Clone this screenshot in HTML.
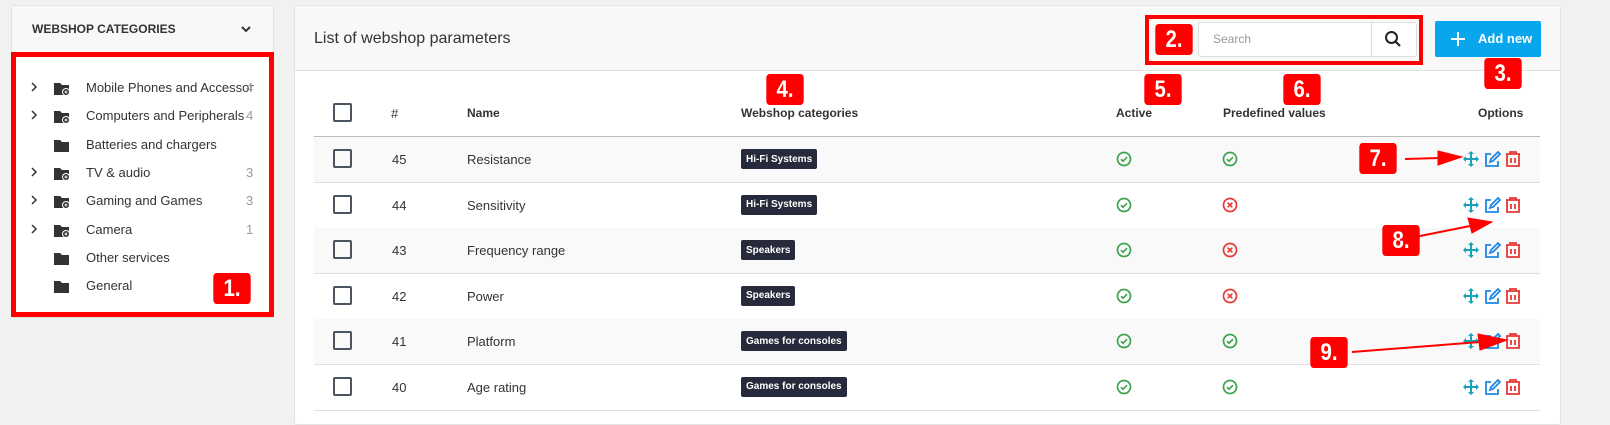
<!DOCTYPE html><html><head><style>
*{box-sizing:border-box;margin:0;padding:0}
body{width:1610px;height:418px;background:#f1f1f1;font-family:"Liberation Sans",sans-serif;position:relative;overflow:hidden;color:#333}
.abs{position:absolute}
.card{background:#fff;border:1px solid #e3e3e3;border-radius:3px}
.badge{position:absolute;background:#f00;color:#fff;font-weight:bold;font-size:24px;border-radius:4px;text-align:center;line-height:31px;width:44px;height:31px;font-family:"Liberation Sans",sans-serif;transform:scaleX(.85)}
.tag{position:absolute;background:#272a3a;color:#fff;font-size:10px;font-weight:bold;padding:0 5px;height:20px;display:flex;align-items:center;border-radius:2px}
.cb{position:absolute;left:333px;width:19px;height:19px;border:2px solid #4a5560;border-radius:2px}
.row{position:absolute;left:314px;width:1226px;height:46px;border-bottom:1px solid #e0e0e0}
.t{position:absolute;font-size:13px;color:#333}
</style></head><body>
<div class="abs card" style="left:11px;top:5px;width:263px;height:313px"></div>
<div class="abs" style="left:12px;top:6px;width:261px;height:46px;background:#f8f8f8"></div>
<div class="abs" style="left:32px;top:22px;font-size:12px;font-weight:bold;color:#333">WEBSHOP CATEGORIES</div>
<svg class="abs" style="left:240px;top:24px" width="12" height="10"><path d="M2 3l4 4 4-4" stroke="#333" stroke-width="2" fill="none"/></svg>
<div class="abs" style="left:11px;top:52px;width:263px;height:265px;border:5px solid #f00"></div>
<div class="abs" style="left:0;top:0">
<script>
var items=[["Mobile Phones and Accessor","4",1],["Computers and Peripherals","4",1],["Batteries and chargers","",0],["TV & audio","3",1],["Gaming and Games","3",1],["Camera","1",1],["Other services","",0],["General","",0]];
var h="";items.forEach(function(it,i){var y=80+i*28.3;
if(it[2])h+='<svg class="abs" style="left:30px;top:'+(y+2)+'px" width="8" height="10"><path d="M2 1l4 4-4 4" stroke="#333" stroke-width="1.5" fill="none"/></svg>';
h+='<svg class="abs" style="left:53px;top:'+y+'px" width="18" height="16"><path d="M1 3h6l2 2h7v10H1z" fill="#333"/>'+(it[2]?'<circle cx="13" cy="12" r="4" fill="#fff"/><circle cx="13" cy="12" r="3" fill="#333"/><path d="M11.5 12h3M13 10.5v3" stroke="#fff" stroke-width="1"/>':'')+'</svg>';
h+='<div class="abs" style="left:86px;top:'+(y)+'px;font-size:13px;color:#333;width:165px;white-space:nowrap;overflow:visible">'+it[0].replace("&","&amp;")+'</div>';
if(it[1])h+='<div class="abs" style="left:246px;top:'+y+'px;font-size:13px;color:#999">'+it[1]+'</div>';});
document.write(h);
</script>
</div>
<div class="badge" style="left:210px;top:273px">1.</div>

<div class="abs card" style="left:294px;top:5px;width:1267px;height:420px"></div>
<div class="abs" style="left:295px;top:6px;width:1265px;height:65px;background:#f8f8f8;border-bottom:1px solid #e0e0e0"></div>
<div class="abs" style="left:314px;top:30px;font-size:16px;color:#333">List of webshop parameters</div>
<div class="abs" style="left:1145px;top:15px;width:278px;height:50px;border:4px solid #f00"></div>
<div class="badge" style="left:1152px;top:24px">2.</div>
<div class="abs" style="left:1198px;top:22px;width:219px;height:35px;border:1px solid #ddd;border-radius:3px;background:#fff"></div>
<div class="abs" style="left:1371px;top:22px;width:1px;height:35px;background:#ddd"></div>
<div class="abs" style="left:1213px;top:32px;font-size:12px;color:#999">Search</div>
<svg class="abs" style="left:1384px;top:30px" width="18" height="18"><circle cx="7.5" cy="7.5" r="5.5" stroke="#222" stroke-width="2" fill="none"/><path d="M11.5 11.5l4.5 4.5" stroke="#222" stroke-width="2.2"/></svg>
<div class="abs" style="left:1435px;top:21px;width:106px;height:36px;background:#0aa6ed;border-radius:2px"></div>
<svg class="abs" style="left:1450px;top:31px" width="16" height="16"><path d="M8 1v14M1 8h14" stroke="#fff" stroke-width="2"/></svg>
<div class="abs" style="left:1478px;top:31px;font-size:13px;color:#fff;font-weight:bold">Add new</div>
<div class="badge" style="left:1481px;top:58px">3.</div>

<div class="abs" style="left:314px;top:136px;width:1226px;height:1px;background:#bbb"></div>
<div class="cb" style="top:103px"></div>
<div class="t" style="left:391px;top:106px">#</div>
<div class="t" style="left:467px;top:106px;font-weight:bold;font-size:12px">Name</div>
<div class="t" style="left:741px;top:106px;font-weight:bold;font-size:12px">Webshop categories</div>
<div class="t" style="left:1116px;top:106px;font-weight:bold;font-size:12px">Active</div>
<div class="t" style="left:1223px;top:106px;font-weight:bold;font-size:12px">Predefined values</div>
<div class="t" style="left:1478px;top:106px;font-weight:bold;font-size:12px">Options</div>
<div class="badge" style="left:763px;top:74px">4.</div>
<div class="badge" style="left:1141px;top:74px">5.</div>
<div class="badge" style="left:1280px;top:74px">6.</div>

<script>
var rows=[["45","Resistance","Hi-Fi Systems",1],["44","Sensitivity","Hi-Fi Systems",0],["43","Frequency range","Speakers",0],["42","Power","Speakers",0],["41","Platform","Games for consoles",1],["40","Age rating","Games for consoles",1]];
var ok='<circle cx="8" cy="8" r="6.5" stroke="#3fa34d" stroke-width="1.7" fill="none"/><path d="M5 8.2l2 2 4-4" stroke="#3fa34d" stroke-width="1.7" fill="none"/>';
var no='<circle cx="8" cy="8" r="6.5" stroke="#e53935" stroke-width="1.7" fill="none"/><path d="M5.7 5.7l4.6 4.6M10.3 5.7l-4.6 4.6" stroke="#e53935" stroke-width="1.7"/>';
var h="";rows.forEach(function(r,i){var y=137+i*45.5;
h+='<div class="row" style="top:'+y+'px;background:'+(i%2?'#fff':'#f9f9f9')+'"></div>';
h+='<div class="cb" style="top:'+(y+12)+'px"></div>';
h+='<div class="t" style="left:392px;top:'+(y+15)+'px">'+r[0]+'</div>';
h+='<div class="t" style="left:467px;top:'+(y+15)+'px">'+r[1]+'</div>';
h+='<div class="tag" style="left:741px;top:'+(y+12)+'px">'+r[2]+'</div>';
h+='<svg class="abs" style="left:1116px;top:'+(y+14)+'px" width="16" height="16">'+ok+'</svg>';
h+='<svg class="abs" style="left:1222px;top:'+(y+14)+'px" width="16" height="16">'+(r[3]?ok:no)+'</svg>';
h+='<svg class="abs" style="left:1463px;top:'+(y+13)+'px" width="60" height="18">'+
'<g stroke="#17a2b8" stroke-width="2" fill="#17a2b8"><path d="M8 2v14M1 9h14" fill="none"/><path d="M8 1l3 3H5zM8 17l3-3H5zM0 9l3-3v6zM16 9l-3-3v6z" stroke="none"/></g>'+
'<g stroke="#1e88e5" stroke-width="1.8" fill="none"><path d="M28 4h-5v12h12v-5"/><path d="M27 12l1-3 7-7 2 2-7 7z"/></g>'+
'<g stroke="#e53935" stroke-width="1.8" fill="none"><path d="M43 4h14M47 4V2h6v2M44 4v12h12V4M48 8v5M52 8v5"/></g></svg>';});
document.write(h);
</script>

<div class="badge" style="left:1356px;top:143px">7.</div>
<div class="badge" style="left:1379px;top:225px">8.</div>
<div class="badge" style="left:1307px;top:337px">9.</div>
<svg class="abs" style="left:0;top:0" width="1610" height="418">
<g fill="#f00" stroke="#f00">
<path d="M1405 159L1440 158" stroke-width="2"/><path d="M1438 151L1462 157L1438 165z"/>
<path d="M1400 240L1470 226" stroke-width="2"/><path d="M1468 218L1492 222L1472 233z"/>
<path d="M1352 352L1480 342" stroke-width="2"/><path d="M1478 334L1507 340L1480 350z"/>
</g></svg>
</body></html>
